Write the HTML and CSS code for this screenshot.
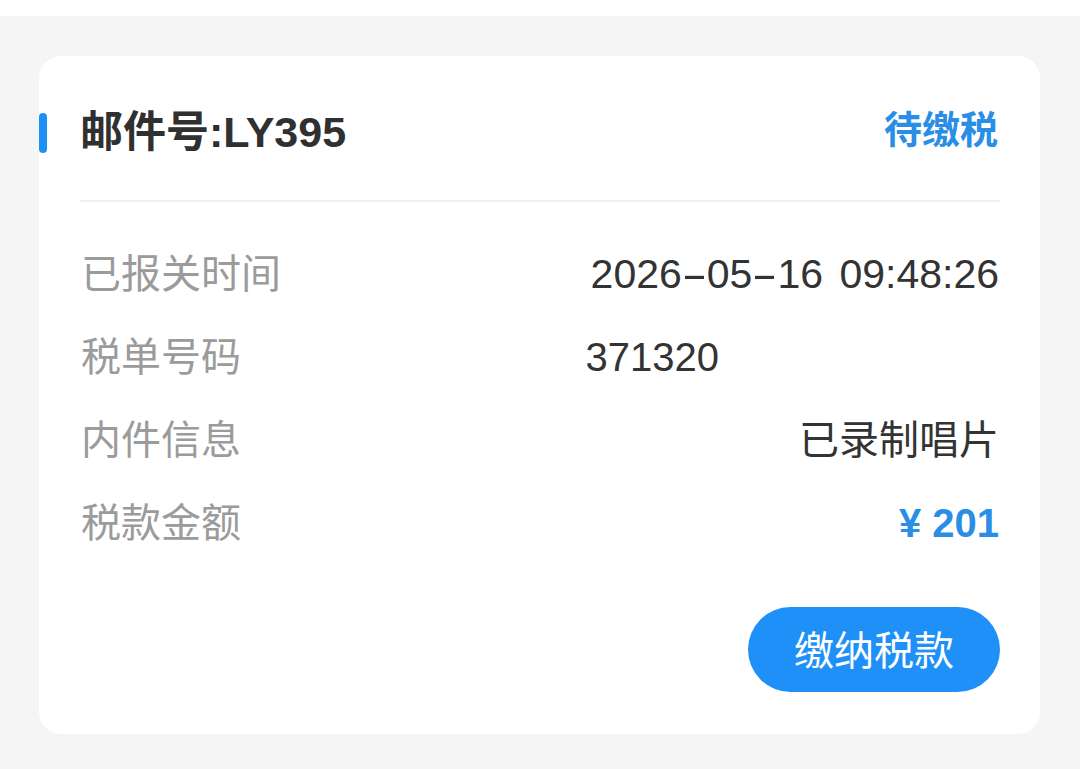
FILE: index.html
```html
<!DOCTYPE html>
<html lang="zh-CN">
<head>
<meta charset="utf-8">
<title>邮件税款</title>
<link rel="stylesheet" href="styles.css">
</head>
<body>
<div class="topbar"></div>
<main class="page">
  <section class="card">
    <header class="card-head">
      <span class="accent"></span>
      <h1 class="title">邮件号:LY395<span class="redact redact-title"></span></h1>
      <span class="status">待缴税</span>
    </header>
    <div class="divider"></div>
    <div class="rows">
      <div class="row"><span class="label">已报关时间</span><span class="value date">2026<span class="dash">-</span>05<span class="dash">-</span>16 09:48:26</span></div>
      <div class="row"><span class="label">税单号码</span><span class="value">371320<span class="redact redact-num"></span></span></div>
      <div class="row"><span class="label">内件信息</span><span class="value cn">已录制唱片</span></div>
      <div class="row"><span class="label">税款金额</span><span class="value amount">¥ 201</span></div>
    </div>
    <div class="actions">
      <button class="pay-btn" type="button">缴纳税款</button>
    </div>
  </section>
</main>
</body>
</html>
```
FILE: styles.css
```css
* { box-sizing: border-box; }
html, body {
  margin: 0;
  padding: 0;
  background: #ffffff;
  font-family: "Liberation Sans", "Noto Sans CJK SC", sans-serif;
}
.topbar {
  height: 16px;
  background: #ffffff;
}
.page {
  background: #f5f5f5;
  height: 753px;
  padding: 40px 40px 0 39px;
}
.card {
  background: #ffffff;
  border-radius: 22px;
  width: 1001px;
  height: 678px;
  padding: 0 40px 0 41px;
  display: flex;
  flex-direction: column;
}
.card-head {
  height: 144px;
  display: flex;
  align-items: center;
  margin-left: -41px;
}
.accent {
  width: 8px;
  height: 40px;
  border-radius: 4px;
  background: #1e8ff5;
  margin-top: 10px;
  flex: none;
}
.title {
  margin: 0 0 0 33px;
  font-size: 43px;
  font-weight: 700;
  color: #303030;
  flex: 1;
  display: flex;
  align-items: center;
}
.redact {
  display: inline-block;
}
.redact-title { width: 150px; height: 10px; }
.redact-num { width: 280px; height: 10px; }
.status {
  font-family: "Noto Sans CJK SC", sans-serif;
  font-size: 38px;
  font-weight: 700;
  color: #2a8de6;
  margin-right: 2px;
  margin-bottom: 4px;
}
.divider {
  height: 2px;
  background: #efefef;
}
.rows {
  padding-top: 31px;
  display: flex;
  flex-direction: column;
}
.row {
  height: 83px;
  display: flex;
  align-items: center;
  justify-content: space-between;
}
.label {
  font-size: 40px;
  color: #9b9b9b;
  margin-left: 1px;
  margin-bottom: 7px;
}
.value {
  font-size: 40px;
  color: #333333;
  margin-right: 1px;
  display: flex;
  align-items: center;
}
.value.cn {
  margin-bottom: 7px;
}
.date {
  font-size: 41px;
  word-spacing: 5px;
  white-space: pre;
}
.dash {
  display: inline-block;
  width: 25px;
  text-align: center;
  transform: scaleX(1.9);
}
.amount {
  color: #2a8de6;
  font-weight: 700;
}
.actions {
  display: flex;
  justify-content: flex-end;
  padding-top: 42px;
}
.pay-btn {
  height: 85px;
  width: 252px;
  border: none;
  border-radius: 43px;
  background: #1e90f7;
  color: #ffffff;
  font-family: "Noto Sans CJK SC", sans-serif;
  font-size: 40px;
  padding: 0 0 4px;
  cursor: pointer;
}
```
